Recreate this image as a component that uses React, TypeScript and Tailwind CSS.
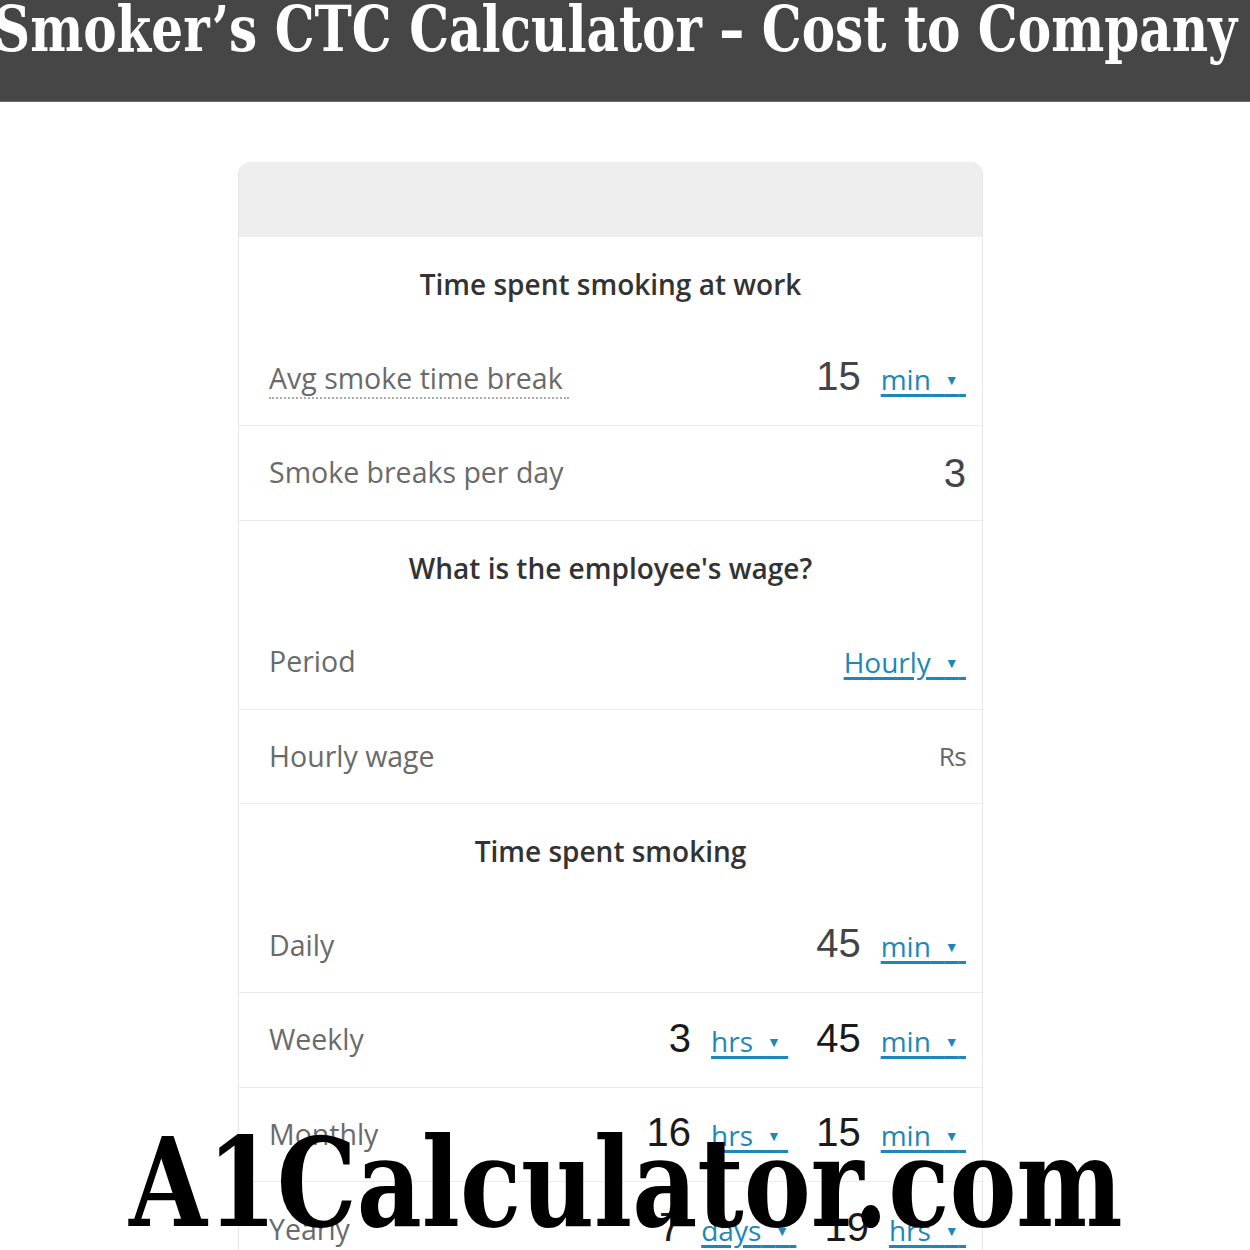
import React from 'react';

const sans = "font-['Open_Sans','Noto_Sans',sans-serif]";
const slab = "font-['DejaVu_Serif_Condensed','DejaVu_Serif',serif]";

function Unit({ label }: { label: string }) {
  return (
    <span className={`${sans} text-[28px] text-[#1d87b8] underline decoration-[3px] underline-offset-[4px]`}>
      {label}
      {'\u2002'}
      <span className="text-[14px] align-[5px]">▼</span>
      {'\u00a0'}
    </span>
  );
}

function Num({ value, dark }: { value: string; dark?: boolean }) {
  return (
    <span
      className={`font-['Liberation_Sans',Arial,sans-serif] text-[40px] leading-none ${dark ? 'text-[#1a1a1a]' : 'text-[#444]'}`}
    >
      {value}
    </span>
  );
}

function Heading({ children }: { children: React.ReactNode }) {
  return (
    <div className={`h-[94.5px] flex items-center justify-center ${sans} text-[28px] font-semibold text-[#333]`}>
      {children}
    </div>
  );
}

function Row({ label, children, last }: { label: React.ReactNode; children?: React.ReactNode; last?: boolean }) {
  return (
    <div
      className={`h-[94.5px] flex items-center justify-between pl-[30px] pr-[16px] ${last ? '' : 'border-b border-[#ececec]'}`}
    >
      <div className={`${sans} text-[28.5px] text-[#6a6a6a]`}>{label}</div>
      <div className="flex items-baseline">{children}</div>
    </div>
  );
}

export default function App() {
  return (
    <div className="relative w-[1250px] h-[1250px] overflow-hidden bg-white">
      {/* Header */}
      <header className="h-[102px] bg-[#464646] border-b border-[#6a6a6a] overflow-hidden">
        <h1
          className={`${slab} inline-block origin-left scale-x-[0.87] font-bold text-white text-[64px] leading-none whitespace-nowrap -ml-[6px] -mt-[3px]`}
        >
          Smoker’s CTC Calculator – Cost to Company
        </h1>
      </header>

      {/* Calculator card */}
      <div className="pl-[238px] pt-[60px]">
        <div className="w-[745px] border-x border-[#e6e6e6] rounded-t-[12px] overflow-hidden">
          <div className="h-[75px] bg-[#eeeeee]" />

          <Heading>Time spent smoking at work</Heading>
          <Row
            label={
              <span className="border-b-2 border-dotted border-[#aaa] pr-[6px]">Avg smoke time break</span>
            }
          >
            <Num value="15" />
            <span className="w-[20px]" />
            <Unit label="min" />
          </Row>
          <Row label="Smoke breaks per day">
            <Num value="3" />
          </Row>

          <Heading>What is the employee's wage?</Heading>
          <Row label="Period">
            <Unit label="Hourly" />
          </Row>
          <Row label="Hourly wage">
            <span className={`${sans} text-[26px] text-[#666] tracking-tight`}>Rs</span>
          </Row>

          <Heading>Time spent smoking</Heading>
          <Row label="Daily">
            <Num value="45" />
            <span className="w-[20px]" />
            <Unit label="min" />
          </Row>
          <Row label="Weekly">
            <Num value="3" dark />
            <span className="w-[20px]" />
            <Unit label="hrs" />
            <span className="w-[28px]" />
            <Num value="45" dark />
            <span className="w-[20px]" />
            <Unit label="min" />
          </Row>
          <Row label="Monthly">
            <Num value="16" dark />
            <span className="w-[20px]" />
            <Unit label="hrs" />
            <span className="w-[28px]" />
            <Num value="15" dark />
            <span className="w-[20px]" />
            <Unit label="min" />
          </Row>
          <Row label="Yearly" last>
            <Num value="7" dark />
            <span className="w-[20px]" />
            <Unit label="days" />
            <span className="w-[28px]" />
            <Num value="19" dark />
            <span className="w-[20px]" />
            <Unit label="hrs" />
          </Row>
        </div>
      </div>

      {/* Watermark */}
      <div
        className={`absolute left-[129px] top-[1121px] origin-left scale-x-90 ${slab} font-bold text-black text-[124px] leading-none whitespace-nowrap`}
      >
        A1Calculator.com
      </div>
    </div>
  );
}
